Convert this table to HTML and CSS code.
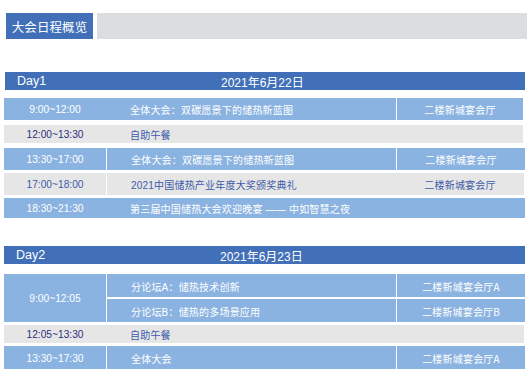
FILE: index.html
```html
<!DOCTYPE html>
<html lang="zh">
<head>
<meta charset="utf-8">
<link rel="stylesheet" href="styles.css">
</head>
<body>
<div class="page">
  <div class="title-bar">
    <div class="title">大会日程概览</div>
    <div class="title-fill"></div>
  </div>

  <section class="day day-first">
    <div class="day-head"><span class="day-label">Day1</span><span class="day-date">2021年6月22日</span></div>
    <div class="row blue h22 w519 mt8">
      <div class="time">9:00~12:00</div>
      <div class="topic">全体大会：双碳愿景下的储热新蓝图</div>
      <div class="venue sep">二楼新城宴会厅</div>
    </div>
    <div class="row gray h18 w519 mt5">
      <div class="time dark">12:00~13:30</div>
      <div class="topic">自助午餐</div>
      <div class="venue"></div>
    </div>
    <div class="row blue h22 mt5">
      <div class="time">13:30~17:00</div>
      <div class="topic sep">全体大会：双碳愿景下的储热新蓝图</div>
      <div class="venue sep">二楼新城宴会厅</div>
    </div>
    <div class="row gray h22 w520 mt3">
      <div class="time">17:00~18:00</div>
      <div class="topic sep">2021中国储热产业年度大奖颁奖典礼</div>
      <div class="venue">二楼新城宴会厅</div>
    </div>
    <div class="row blue h20 mt3">
      <div class="time">18:30~21:30</div>
      <div class="topic wide">第三届中国储热大会欢迎晚宴 —— 中如智慧之夜</div>
    </div>
  </section>

  <section class="day day-second">
    <div class="day-head"><span class="day-label">Day2</span><span class="day-date">2021年6月23日</span></div>
    <div class="row split mt10">
      <div class="time span2">9:00~12:05</div>
      <div class="topic sep">分论坛A：储热技术创新</div>
      <div class="venue sep">二楼新城宴会厅A</div>
      <div class="topic sep">分论坛B：储热的多场景应用</div>
      <div class="venue sep">二楼新城宴会厅B</div>
    </div>
    <div class="row gray h18 w520 mt3">
      <div class="time dark">12:05~13:30</div>
      <div class="topic">自助午餐</div>
      <div class="venue"></div>
    </div>
    <div class="row blue h23 mt3">
      <div class="time">13:30~17:30</div>
      <div class="topic sep">全体大会</div>
      <div class="venue sep">二楼新城宴会厅A</div>
    </div>
  </section>
</div>
</body>
</html>
```

FILE: styles.css
```css
* { box-sizing: border-box; }

body {
  margin: 0;
  background: #ffffff;
  font-family: "Liberation Sans", "Noto Sans CJK SC", sans-serif;
}

.page {
  padding: 13px 0 0 4px;
}

.title-bar {
  display: flex;
  gap: 4px;
  height: 26px;
  margin-left: 2px;
}

.title {
  width: 87px;
  background: #4170b8;
  color: #ffffff;
  font-family: "Noto Sans CJK SC", sans-serif;
  font-size: 12.5px;
  letter-spacing: 0.1px;
  display: flex;
  align-items: center;
  justify-content: center;
}

.title-fill {
  width: 430px;
  background: #dcdddf;
}

.day {
  width: 521px;
}

.day-first { margin-top: 33px; }
.day-second { margin-top: 28px; }

.day-head {
  height: 18px;
  background: #4170b8;
  color: #ffffff;
  display: flex;
  align-items: center;
  padding-left: 12px;
  font-size: 12px;
  font-family: "Liberation Sans", "Noto Sans CJK SC", sans-serif;
}

.day-first .day-head { margin-left: 1px; width: 520px; }

.day-label {
  width: 204px;
  font-size: 12.5px;
}

.row {
  display: grid;
  grid-template-columns: 102px 290px 1fr;
  width: 521px;
}

.row.blue { background: #8bb3e1; }
.row.gray { background: #e6e6e6; }

.h18 { height: 18px; }
.h20 { height: 20px; }
.h22 { height: 22px; }
.h23 { height: 23px; }
.w519 { width: 519px; }
.w520 { width: 520px; }

.mt3 { margin-top: 3px; }
.mt5 { margin-top: 5px; }
.mt8 { margin-top: 8px; }
.mt10 { margin-top: 10px; }

.time,
.topic,
.venue {
  display: flex;
  align-items: center;
  color: #ffffff;
  font-size: 10px;
}

.time {
  justify-content: center;
  font-family: "Liberation Sans", sans-serif;
  font-size: 10.2px;
  padding-top: 1px;
}

.topic {
  padding-left: 24px;
  font-family: "Liberation Sans", "Noto Sans CJK SC", sans-serif;
  letter-spacing: 0.2px;
  padding-top: 1px;
}

.venue {
  justify-content: center;
  font-family: "Noto Sans CJK SC", sans-serif;
  letter-spacing: 0.2px;
  padding-top: 1px;
}

.sep { border-left: 1px solid #ffffff; }

.topic.wide { grid-column: 2 / 4; }

.row.gray .time { color: #3d5aa9; }
.row.gray .time.dark { color: #2b2f7e; }
.row.gray .topic,
.row.gray .venue { color: #3d5aa9; }

.row.split {
  grid-template-rows: 23px 23px;
  row-gap: 2px;
}

.row.split > div { background: #8bb3e1; }

.span2 { grid-row: 1 / 3; }
```
